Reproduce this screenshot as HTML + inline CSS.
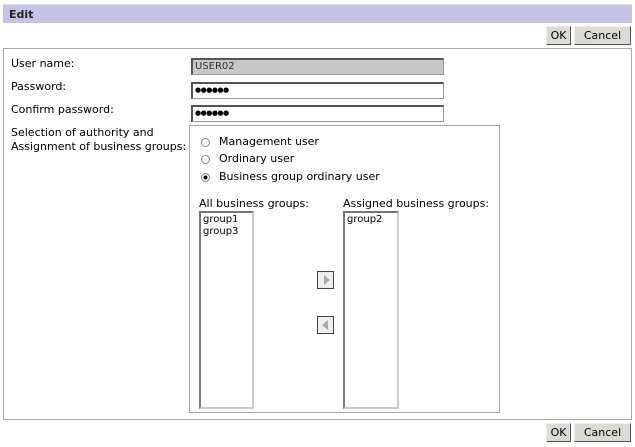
<!DOCTYPE html>
<html><head><style>
*{box-sizing:border-box}
body{margin:0;width:635px;height:447px;background:#fff;font-family:"DejaVu Sans","Liberation Sans",sans-serif;font-size:11px;color:#000;position:relative;overflow:hidden}
.a{position:absolute}
.title{left:3px;top:4px;width:629px;height:19px;background:#c5c4e6;border-top:1px solid #ddd;font-weight:bold;padding:3px 0 0 6px;font-size:11px;color:#222}
.btn{height:19px;background:#dcdad5;border:1px solid #888;border-color:#eee #555 #555 #eee;font-size:11px;text-align:center;line-height:17px}
.inp{height:17px;border:1px solid #999;border-top:2px solid #555;border-left:2px solid #555;padding-left:2px;line-height:13px;font-size:10px}
.dots{font-size:7px;letter-spacing:-0.5px;font-weight:bold}
.list{border:2px solid #ccc;border-top-color:#777;border-left-color:#777;padding:1px 2px;font-size:10px;line-height:12px}
.rad{width:9px;height:9px;border-radius:50%;border:1px solid #888;background:#fff}
</style></head><body>
<div class="a title">Edit</div>
<div class="a btn" style="left:546px;top:26px;width:25px">OK</div>
<div class="a btn" style="left:574px;top:26px;width:57px">Cancel</div>
<div class="a" style="left:3px;top:48px;width:629px;height:372px;border:1px solid #aaa"></div>
<div class="a" style="left:11px;top:57px">User name:</div>
<div class="a" style="left:11px;top:80px">Password:</div>
<div class="a" style="left:11px;top:103px">Confirm password:</div>
<div class="a" style="left:11px;top:126px;line-height:14px">Selection of authority and<br>Assignment of business groups:</div>
<div class="a inp" style="left:191px;top:58px;width:253px;background:#c8c8c8;color:#333">USER02</div>
<div class="a inp dots" style="left:191px;top:82px;width:253px">●●●●●●</div>
<div class="a inp dots" style="left:191px;top:105px;width:253px">●●●●●●</div>
<div class="a" style="left:189px;top:125px;width:311px;height:288px;border:1px solid #aaa"></div>
<div class="a rad" style="left:201px;top:138px"></div>
<div class="a rad" style="left:201px;top:155px"></div>
<div class="a rad" style="left:201px;top:173px;background:radial-gradient(circle,#000 35%,#fff 45%)"></div>
<div class="a" style="left:219px;top:135px">Management user</div>
<div class="a" style="left:219px;top:152px">Ordinary user</div>
<div class="a" style="left:219px;top:170px">Business group ordinary user</div>
<div class="a" style="left:199px;top:197px">All business groups:</div>
<div class="a" style="left:343px;top:197px">Assigned business groups:</div>
<div class="a list" style="left:199px;top:211px;width:55px;height:198px">group1<br>group3</div>
<div class="a list" style="left:343px;top:211px;width:56px;height:198px">group2</div>
<div class="a" style="left:317px;top:271px;width:17px;height:18px;border:1px solid #444;background:#eee"><div class="a" style="left:6px;top:3px;border-left:6px solid #aaa;border-top:5px solid transparent;border-bottom:5px solid transparent"></div></div>
<div class="a" style="left:317px;top:316px;width:17px;height:18px;border:1px solid #444;background:#eee"><div class="a" style="left:4px;top:3px;border-right:6px solid #aaa;border-top:5px solid transparent;border-bottom:5px solid transparent"></div></div>
<div class="a btn" style="left:546px;top:423px;width:25px">OK</div>
<div class="a btn" style="left:574px;top:423px;width:57px">Cancel</div>
</body></html>
